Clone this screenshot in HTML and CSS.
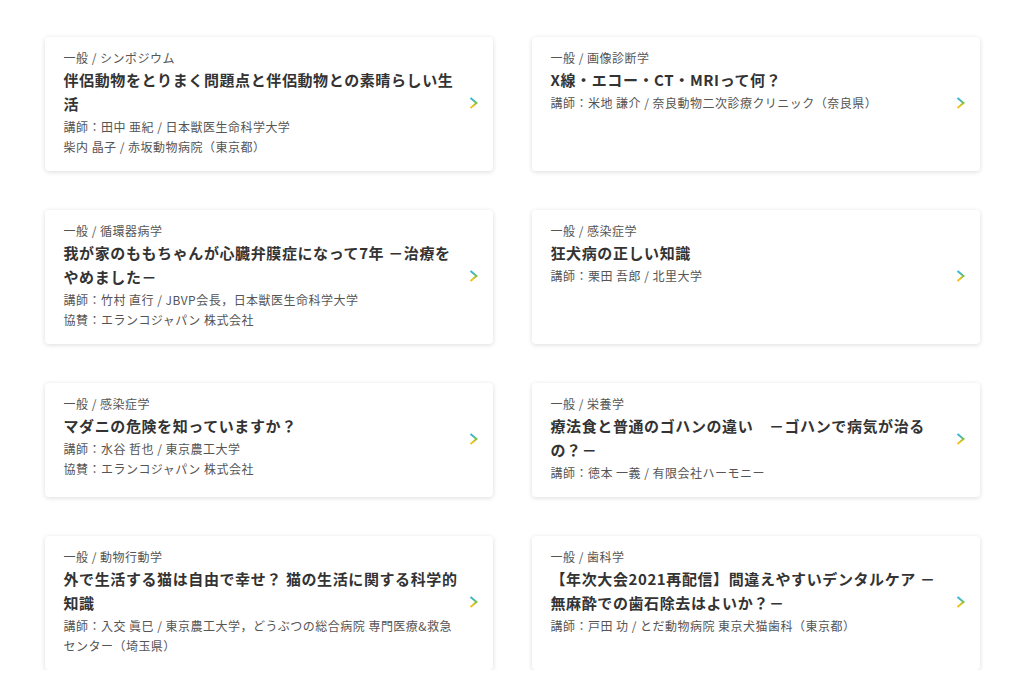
FILE: index.html
```html
<!DOCTYPE html>
<html lang="ja">
<head>
  <meta charset="UTF-8">
  <meta name="viewport" content="width=device-width, initial-scale=1.0">
  <title>講演一覧</title>
  <link rel="stylesheet" href="styles.css">
</head>
<body>
  <svg width="0" height="0" class="defs">
    <defs>
      <linearGradient id="arrow-grad" x1="0" y1="0" x2="0" y2="12" gradientUnits="userSpaceOnUse">
        <stop offset="0" stop-color="#2fb0ea"/>
        <stop offset="0.25" stop-color="#3fb7c4"/>
        <stop offset="0.5" stop-color="#78c145"/>
        <stop offset="0.75" stop-color="#f2c41e"/>
        <stop offset="1" stop-color="#f7b91a"/>
      </linearGradient>
    </defs>
  </svg>

  <div class="lecture-list">
    <a class="lecture-card" href="#">
      <div class="lecture-body">
        <p class="lecture-cat">一般 / シンポジウム</p>
        <h2 class="lecture-title">伴侶動物をとりまく問題点と伴侶動物との素晴らしい生活</h2>
        <p class="lecture-info">講師：田中 亜紀 / 日本獣医生命科学大学</p>
        <p class="lecture-info">柴内 晶子 / 赤坂動物病院（東京都）</p>
      </div>
      <svg class="arrow" viewBox="0 0 9 12"><path d="M1.5 1L7.5 6L1.5 11"/></svg>
    </a>

    <a class="lecture-card" href="#">
      <div class="lecture-body">
        <p class="lecture-cat">一般 / 画像診断学</p>
        <h2 class="lecture-title">X線・エコー・CT・MRIって何？</h2>
        <p class="lecture-info">講師：米地 謙介 / 奈良動物二次診療クリニック（奈良県）</p>
      </div>
      <svg class="arrow" viewBox="0 0 9 12"><path d="M1.5 1L7.5 6L1.5 11"/></svg>
    </a>

    <a class="lecture-card" href="#">
      <div class="lecture-body">
        <p class="lecture-cat">一般 / 循環器病学</p>
        <h2 class="lecture-title">我が家のももちゃんが心臓弁膜症になって7年 －治療をやめました－</h2>
        <p class="lecture-info">講師：竹村 直行 / JBVP会長，日本獣医生命科学大学</p>
        <p class="lecture-info">協賛：エランコジャパン 株式会社</p>
      </div>
      <svg class="arrow" viewBox="0 0 9 12"><path d="M1.5 1L7.5 6L1.5 11"/></svg>
    </a>

    <a class="lecture-card" href="#">
      <div class="lecture-body">
        <p class="lecture-cat">一般 / 感染症学</p>
        <h2 class="lecture-title">狂犬病の正しい知識</h2>
        <p class="lecture-info">講師：栗田 吾郎 / 北里大学</p>
      </div>
      <svg class="arrow" viewBox="0 0 9 12"><path d="M1.5 1L7.5 6L1.5 11"/></svg>
    </a>

    <a class="lecture-card" href="#">
      <div class="lecture-body">
        <p class="lecture-cat">一般 / 感染症学</p>
        <h2 class="lecture-title">マダニの危険を知っていますか？</h2>
        <p class="lecture-info">講師：水谷 哲也 / 東京農工大学</p>
        <p class="lecture-info">協賛：エランコジャパン 株式会社</p>
      </div>
      <svg class="arrow" viewBox="0 0 9 12"><path d="M1.5 1L7.5 6L1.5 11"/></svg>
    </a>

    <a class="lecture-card" href="#">
      <div class="lecture-body">
        <p class="lecture-cat">一般 / 栄養学</p>
        <h2 class="lecture-title">療法食と普通のゴハンの違い　－ゴハンで病気が治るの？－</h2>
        <p class="lecture-info">講師：徳本 一義 / 有限会社ハーモニー</p>
      </div>
      <svg class="arrow" viewBox="0 0 9 12"><path d="M1.5 1L7.5 6L1.5 11"/></svg>
    </a>

    <a class="lecture-card" href="#">
      <div class="lecture-body">
        <p class="lecture-cat">一般 / 動物行動学</p>
        <h2 class="lecture-title">外で生活する猫は自由で幸せ？ 猫の生活に関する科学的知識</h2>
        <p class="lecture-info">講師：入交 眞巳 / 東京農工大学，どうぶつの総合病院 専門医療&amp;救急センター（埼玉県）</p>
      </div>
      <svg class="arrow" viewBox="0 0 9 12"><path d="M1.5 1L7.5 6L1.5 11"/></svg>
    </a>

    <a class="lecture-card" href="#">
      <div class="lecture-body">
        <p class="lecture-cat">一般 / 歯科学</p>
        <h2 class="lecture-title">【年次大会2021再配信】間違えやすいデンタルケア －無麻酔での歯石除去はよいか？－</h2>
        <p class="lecture-info">講師：戸田 功 / とだ動物病院 東京犬猫歯科（東京都）</p>
      </div>
      <svg class="arrow" viewBox="0 0 9 12"><path d="M1.5 1L7.5 6L1.5 11"/></svg>
    </a>
  </div>
</body>
</html>
```

FILE: styles.css
```css
:root {
  --text: #333333;
  --text-light: #555555;
  --background: #ffffff;
}

* {
  margin: 0;
  padding: 0;
  box-sizing: border-box;
}

body {
  background-color: var(--background);
  color: var(--text);
  font-family: "Noto Sans CJK JP", "Noto Sans", sans-serif;
}

.defs {
  position: absolute;
}

.lecture-list {
  width: 935px;
  margin: 37px auto 0;
  display: grid;
  grid-template-columns: 448px 448px;
  gap: 39px;
}

.lecture-card {
  display: flex;
  align-items: center;
  padding: 12px 15px 14px 19px;
  background-color: var(--background);
  border-radius: 4px;
  box-shadow: 0 1px 5px rgba(0, 0, 0, 0.14);
  color: inherit;
  text-decoration: none;
}

.lecture-body {
  width: 397px;
  align-self: flex-start;
}

.lecture-cat {
  font-size: 12px;
  line-height: 18px;
  letter-spacing: 0.04em;
  color: var(--text-light);
  margin-bottom: 1px;
}

.lecture-title {
  font-size: 15px;
  line-height: 24px;
  font-weight: bold;
  letter-spacing: 0.04em;
  color: var(--text);
}

.lecture-info {
  font-size: 12px;
  line-height: 20px;
  letter-spacing: 0.04em;
  color: var(--text-light);
}

.lecture-title + .lecture-info {
  margin-top: 1px;
}

.arrow {
  width: 9px;
  height: 12px;
  margin-left: 8px;
  flex-shrink: 0;
  fill: none;
  stroke: url(#arrow-grad);
  stroke-width: 2;
}
```
